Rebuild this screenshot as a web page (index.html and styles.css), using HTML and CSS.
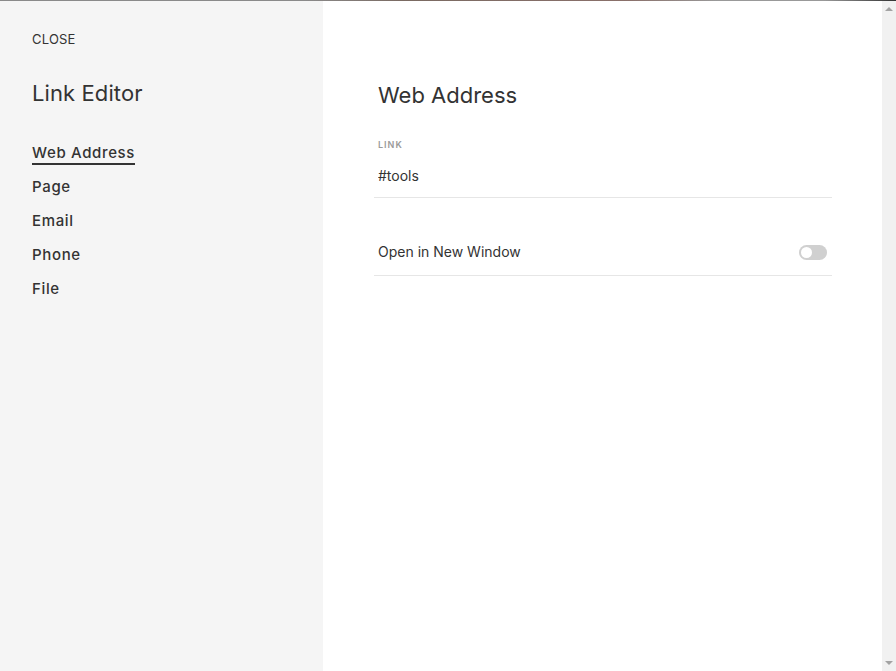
FILE: index.html
```html
<!DOCTYPE html>
<html lang="en">
<head>
    <meta charset="UTF-8">
    <title>Link Editor</title>
    <link rel="stylesheet" href="styles.css">
</head>
<body>
    <div class="topstrip"></div>
    <div class="editor">
        <aside class="sidebar">
            <a class="close" href="#">CLOSE</a>
            <h1>Link Editor</h1>
            <nav class="tabs">
                <a href="#" class="tab active">Web Address</a>
                <a href="#" class="tab">Page</a>
                <a href="#" class="tab">Email</a>
                <a href="#" class="tab">Phone</a>
                <a href="#" class="tab">File</a>
            </nav>
        </aside>

        <main class="panel">
            <h2>Web Address</h2>

            <div class="field">
                <label for="link">LINK</label>
                <input type="text" id="link" value="#tools">
            </div>

            <div class="field row">
                <span>Open in New Window</span>
                <span class="toggle"><span class="knob"></span></span>
            </div>
        </main>

        <div class="scrollbar">
            <span class="arrow up"></span>
            <span class="arrow down"></span>
        </div>
    </div>
</body>
</html>
```

FILE: styles.css
```css
* {
    margin: 0;
    padding: 0;
    box-sizing: border-box;
}

body {
    font-family: Inter, "Liberation Sans", sans-serif;
    color: #333;
    background: white;
    height: 671px;
    overflow: hidden;
}

.topstrip {
    height: 1px;
    background: linear-gradient(90deg, #8a8a8a 0%, #8a8a8a 34%, #7a6a62 45%, #8a706a 70%, #999 80%, #999 92%, #333 100%);
}

.editor {
    display: flex;
    height: 670px;
}

.sidebar {
    width: 323px;
    background: #f5f5f5;
    padding: 30px 32px;
}

.close {
    display: block;
    font-size: 13px;
    line-height: 16px;
    color: #333;
    text-decoration: none;
    letter-spacing: 0.2px;
}

h1 {
    font-size: 22px;
    font-weight: 400;
    line-height: 28px;
    margin-top: 32px;
    letter-spacing: 0.1px;
}

.tabs {
    display: flex;
    flex-direction: column;
    align-items: flex-start;
    margin-top: 36px;
    gap: 14px;
}

.tab {
    font-size: 15px;
    font-weight: 500;
    line-height: 20px;
    color: #333;
    text-decoration: none;
    letter-spacing: 0.65px;
}

.tab.active {
    border-bottom: 2px solid #333;
    margin-bottom: -2px;
}

.panel {
    flex: 1;
    padding: 80px 50px 0 51px;
}

h2 {
    font-size: 22px;
    font-weight: 400;
    line-height: 28px;
    padding-left: 4px;
    margin-bottom: 30px;
}

.field {
    border-bottom: 1px solid #e6e6e6;
    padding: 0 4px;
}

.field label {
    display: block;
    font-size: 9px;
    font-weight: 600;
    letter-spacing: 1px;
    color: #9a9a9a;
    line-height: 12px;
}

.field input {
    display: block;
    width: 100%;
    border: none;
    outline: none;
    background: transparent;
    font-family: inherit;
    font-size: 14px;
    color: #333;
    padding: 16px 0 12px;
    line-height: 18px;
}

.field.row {
    display: flex;
    align-items: center;
    justify-content: space-between;
    margin-top: 45px;
    padding-bottom: 14px;
    font-size: 14px;
    line-height: 18px;
}

.toggle {
    width: 28px;
    height: 15px;
    border-radius: 8px;
    background: #d0d0d0;
    padding: 2px;
    display: flex;
    margin-right: 1px;
}

.knob {
    width: 11px;
    height: 11px;
    border-radius: 50%;
    background: white;
}

.scrollbar {
    width: 14px;
    background: #f1f1f1;
    display: flex;
    flex-direction: column;
    justify-content: space-between;
    align-items: center;
    padding: 6px 0;
}

.arrow {
    width: 0;
    height: 0;
    border-left: 4px solid transparent;
    border-right: 4px solid transparent;
}

.arrow.up {
    border-bottom: 4px solid #a3a3a3;
}

.arrow.down {
    border-top: 4px solid #a3a3a3;
}
```
